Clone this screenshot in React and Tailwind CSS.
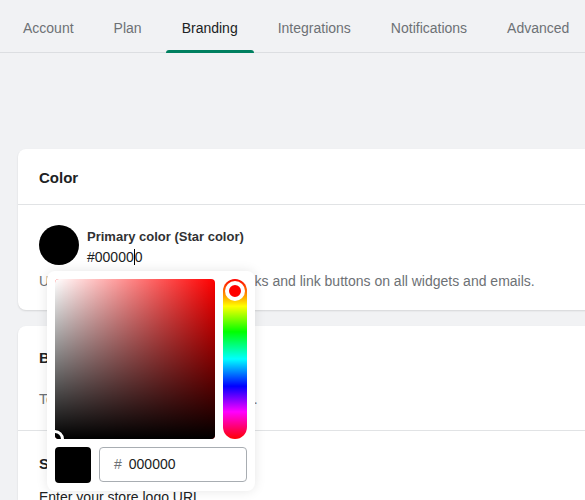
const tabs = ["Account", "Plan", "Branding", "Integrations", "Notifications", "Advanced"];

function Tabs() {
  return (
    <div className="flex h-[53px] border-b border-[#dcdee1] pl-[7px] gap-[8px]">
      {tabs.map((t) => {
        const active = t === "Branding";
        return (
          <div
            key={t}
            className={`relative flex items-center px-4 pt-[4px] text-[14px] ${
              active ? "text-[#202223]" : "text-[#6d7175]"
            }`}
          >
            {t}
            {active && <div className="absolute left-0 right-0 bottom-[-1px] h-[3px] rounded-t bg-[#008060]" />}
          </div>
        );
      })}
    </div>
  );
}

function ColorPicker() {
  return (
    <div className="absolute left-[47px] top-[271px] w-[208px] rounded-lg bg-white p-2 shadow-[0_0_12px_rgba(0,0,0,0.1)]">
      <div className="flex gap-2">
        <div className="relative h-[160px] w-[160px] overflow-hidden rounded bg-[#ff0000]">
          <div className="absolute inset-0 bg-gradient-to-r from-white to-transparent" />
          <div className="absolute inset-0 bg-gradient-to-t from-black to-transparent" />
          <div className="absolute left-[-9px] bottom-[-9px] h-[18px] w-[18px] rounded-full border-[3px] border-white bg-black shadow-[0_0_0_1px_rgba(0,0,0,0.4)]" />
        </div>
        <div className="relative h-[160px] w-[24px] rounded-full bg-[linear-gradient(to_bottom,#ff0000_0%,#ffff00_17%,#00ff00_33%,#00ffff_50%,#0000ff_67%,#ff00ff_83%,#ff0000_100%)]">
          <div className="absolute left-[2px] top-[2px] h-5 w-5 rounded-full border-[4px] border-white bg-[#ff0000]" />
        </div>
      </div>
      <div className="mt-2 flex gap-2">
        <div className="h-9 w-9 rounded bg-black" />
        <div className="flex h-[35px] flex-1 items-center rounded border border-[#a8adb2] pl-[14px] text-[14px] text-[#202223]">
          <span className="mr-[7px] text-[#6d7175]">#</span>
          000000
        </div>
      </div>
    </div>
  );
}

export default function App() {
  return (
    <div
      className="relative h-[500px] w-[585px] overflow-hidden bg-[#f1f2f4]"
      style={{ fontFamily: '"Liberation Sans", Arial, sans-serif' }}
    >
      <Tabs />
      <div className="pl-[18px] pt-[96px]">
        <div className="w-[640px] rounded-lg bg-white shadow-[0_1px_2px_rgba(0,0,0,0.12)]">
          <div className="flex h-[56px] items-center border-b border-[#e1e3e5] px-[21px] pt-[3px] text-[15px] font-semibold text-[#202223]">
            Color
          </div>
          <div className="px-[21px] pt-[20px] pb-[19px]">
            <div className="flex gap-[8px]">
              <div className="h-10 w-10 rounded-full bg-black" />
              <div className="flex flex-col pt-[2px]">
                <span className="text-[13px] font-semibold leading-[20px] text-[#303133]">Primary color (Star color)</span>
                <span className="flex items-center text-[14px] leading-[20px] text-[#202223]">
                  #00000
                  <span className="inline-block h-[16px] w-px bg-black" />0
                </span>
              </div>
            </div>
            <p className="mt-[4px] text-[14px] leading-[20px] text-[#6d7175]">
              Used for stars, button, icon, text links and link buttons on all widgets and emails.
            </p>
          </div>
        </div>
        <div className="mt-4 w-[640px] rounded-lg bg-white shadow-[0_1px_2px_rgba(0,0,0,0.12)]">
          <div className="border-b border-[#e1e3e5] px-[21px] pt-[22px] pb-[21px]">
            <div className="text-[15px] font-semibold leading-[20px] text-[#202223]">Branding</div>
            <p className="mt-[21px] text-[14px] leading-[20px] text-[#6d7175]">Toggle branding on review widgets.</p>
          </div>
          <div className="px-[21px] pt-[23px]">
            <div className="text-[15px] font-semibold leading-[20px] text-[#202223]">Store logo</div>
            <p className="mt-[13px] text-[14px] leading-[20px] text-[#202223]">Enter your store logo URL</p>
          </div>
        </div>
      </div>
      <ColorPicker />
    </div>
  );
}
